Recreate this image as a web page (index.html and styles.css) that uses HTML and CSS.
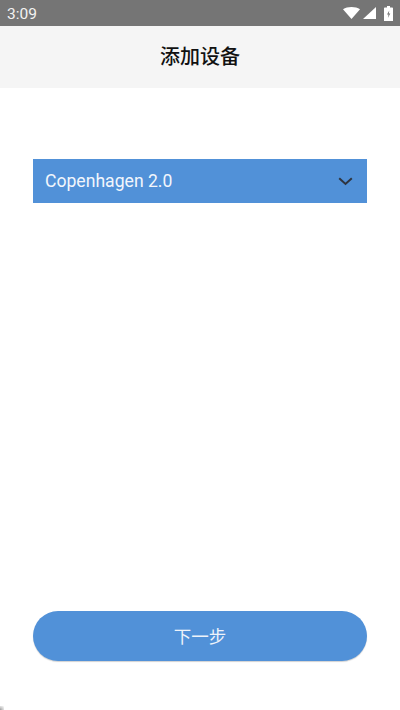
FILE: index.html
```html
<!DOCTYPE html>
<html lang="zh-CN">
<head>
    <meta charset="UTF-8">
    <meta name="viewport" content="width=device-width, initial-scale=1.0">
    <title>添加设备</title>
    <link rel="stylesheet" href="styles.css">
</head>
<body>
<div class="container">
    <div class="status-bar">
        <span class="status-time">3:09</span>
        <div class="status-icons">
            <svg class="icon-wifi" width="17" height="12" viewBox="0 0 17 12"><path d="M0 2.200C2.300.8 5.200 0 8.500 0s6.200.8 8.500 2.200L8.500 12z" fill="#fff"/></svg>
            <svg class="icon-signal" width="13" height="12" viewBox="0 0 13 12"><path d="M13 0v12H0z" fill="#fff"/></svg>
            <svg class="icon-battery" width="9" height="15" viewBox="0 0 9 15"><path d="M3 0h3v1.500h2.200q.8 0 .8.800V15H0V2.300q0-.8.800-.8H3z" fill="#fff"/><path d="M5.300 4.500 3 8.500h1.500l-.6 3.500L6.300 7.500H4.800z" fill="#757575"/></svg>
        </div>
    </div>
    <div class="title-bar">添加设备</div>
    <div class="content">
        <div class="device-select">
            <span>Copenhagen 2.0</span>
            <svg width="15" height="9" viewBox="0 0 15 9"><path d="M1.200 1.200 7.500 7l6.300-5.800" fill="none" stroke="#2f3540" stroke-width="2"/></svg>
        </div>
        <button class="next-button">下一步</button>
    </div>
    <div class="corner-mark"></div>
</div>
</body>
</html>
```

FILE: styles.css
```css
body {
    margin: 0;
    padding: 0;
    font-family: 'Roboto', 'Noto Sans CJK SC', sans-serif;
    background: #fff;
    overflow: hidden;
}
.container {
    display: flex;
    flex-direction: column;
    height: 710px;
    position: relative;
}
.status-bar {
    display: flex;
    align-items: center;
    justify-content: space-between;
    height: 26px;
    padding: 0 7px;
    background: #757575;
    color: #f2f2f2;
    font-size: 15.5px;
}
.status-time {
    padding-top: 2px;
}
.status-icons {
    display: flex;
    align-items: center;
    gap: 3px;
}
.icon-battery {
    margin-left: 5px;
}
.title-bar {
    height: 62px;
    line-height: 62px;
    text-align: center;
    background: #f5f5f5;
    color: #111;
    font-size: 20px;
    font-weight: 500;
}
.content {
    flex: 1;
    display: flex;
    flex-direction: column;
    justify-content: space-between;
    padding: 71px 33px 49px;
}
.device-select {
    display: flex;
    align-items: center;
    justify-content: space-between;
    height: 44px;
    padding: 0 14px 0 12px;
    background: #5191d8;
    color: #f2f6fc;
    font-size: 17.6px;
}
.next-button {
    height: 50px;
    padding: 0 0 2px;
    border: none;
    border-radius: 25px;
    background: #5191d8;
    color: #eef3fa;
    font-family: inherit;
    font-size: 17.500px;
    box-shadow: 0 1px 1px rgba(0, 0, 0, 0.18);
}
.corner-mark {
    position: absolute;
    left: 0;
    bottom: 0;
    width: 4px;
    height: 4px;
    background: radial-gradient(circle at 0 100%, #999 0, #ccc 45%, #fff 100%);
}
```
